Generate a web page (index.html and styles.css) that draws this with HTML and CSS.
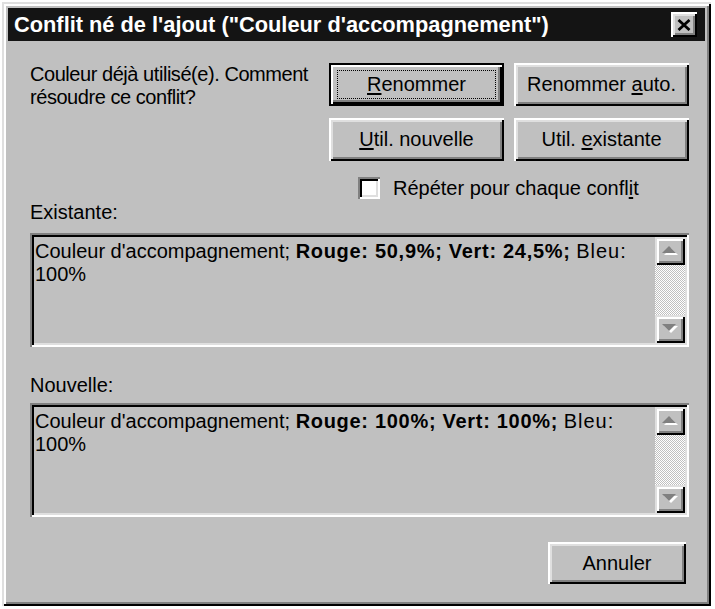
FILE: index.html
```html
<!DOCTYPE html>
<html lang="fr">
<head>
<meta charset="utf-8">
<title>Conflit</title>
<link rel="stylesheet" href="styles.css">
</head>
<body>
<div class="window">
  <div class="titlebar">
    <span class="title">Conflit né de l'ajout ("Couleur d'accompagnement")</span>
    <button class="close" aria-label="Fermer">
      <svg width="14" height="12" viewBox="0 0 14 12"><path d="M1.5 1 L12.5 11 M12.5 1 L1.5 11" stroke="#000" stroke-width="2.8" fill="none"/></svg>
    </button>
  </div>
  <div class="content">
    <div class="top">
      <p class="prompt">Couleur déjà utilisé(e). Comment<br>résoudre ce conflit?</p>
      <div class="actions">
        <button class="btn default"><u>R</u>enommer</button>
        <button class="btn">Renommer <u>a</u>uto.</button>
        <button class="btn"><u>U</u>til. nouvelle</button>
        <button class="btn">Util. <u>e</u>xistante</button>
      </div>
    </div>
    <label class="check"><span class="cbox"></span><span>Répéter pour chaque confl<u>i</u>t</span></label>
    <div class="field-label first">Existante:</div>
    <div class="textbox">
      <div class="text">Couleur d'accompagnement; <b>Rouge: 50,9%; Vert: 24,5%;</b> <span class="tail">Bleu:</span><br>100%</div>
      <div class="scroll">
        <div class="sbtn"><svg width="16" height="10" viewBox="0 0 16 10"><polygon points="9,2 16,9 2,9" fill="#fff"/><polygon points="7,0 14,7 0,7" fill="#808080"/></svg></div>
        <div class="track"></div>
        <div class="sbtn"><svg width="16" height="10" viewBox="0 0 16 10"><polygon points="2,2 16,2 9,9" fill="#fff"/><polygon points="0,0 14,0 7,7" fill="#808080"/></svg></div>
      </div>
    </div>
    <div class="field-label second">Nouvelle:</div>
    <div class="textbox tb2">
      <div class="text">Couleur d'accompagnement; <b>Rouge: 100%; Vert: 100%;</b> <span class="tail">Bleu:</span><br>100%</div>
      <div class="scroll">
        <div class="sbtn"><svg width="16" height="10" viewBox="0 0 16 10"><polygon points="9,2 16,9 2,9" fill="#fff"/><polygon points="7,0 14,7 0,7" fill="#808080"/></svg></div>
        <div class="track"></div>
        <div class="sbtn"><svg width="16" height="10" viewBox="0 0 16 10"><polygon points="2,2 16,2 9,9" fill="#fff"/><polygon points="0,0 14,0 7,7" fill="#808080"/></svg></div>
      </div>
    </div>
    <div class="footer">
      <button class="btn cancel">Annuler</button>
    </div>
  </div>
</div>
</body>
</html>
```
FILE: styles.css
```css
html, body {
  margin: 0;
  background: #ffffff;
}
body {
  padding: 2px;
  font-family: "Liberation Sans", Arial, sans-serif;
  font-size: 20px;
  color: #000;
}
.window {
  width: 709px;
  height: 604px;
  box-sizing: border-box;
  background: #c0c0c0;
  padding: 6px;
  box-shadow: inset 2px 2px #dfdfdf, inset -2px -2px #000, inset 4px 4px #fff, inset -4px -4px #808080;
}
.titlebar {
  height: 33px;
  background: #141414;
  display: flex;
  align-items: center;
  justify-content: space-between;
  padding: 0 8px 0 6px;
}
.title {
  color: #fff;
  font-weight: bold;
  font-size: 21.8px;
  white-space: nowrap;
}
.close {
  width: 26px;
  height: 25px;
  border: 0;
  padding: 0 1px 0 0;
  background: #c0c0c0;
  display: flex;
  align-items: center;
  justify-content: center;
  box-shadow: inset 2px 2px #fff, inset -2px -2px #000, inset 4px 4px #dfdfdf, inset -4px -4px #808080;
}
.content {
  padding: 22px 16px 0 22px;
}
.top {
  display: flex;
  justify-content: space-between;
  align-items: flex-start;
}
.prompt {
  margin: 0;
  line-height: 23px;
  letter-spacing: -0.45px;
}
.actions {
  display: grid;
  grid-template-columns: 175px 175px;
  gap: 12px 10px;
}
.btn {
  height: 43px;
  border: 0;
  padding: 0;
  background: #c0c0c0;
  color: #000;
  font-family: inherit;
  font-size: 20px;
  position: relative;
  box-shadow: inset 2px 2px #fff, inset -2px -2px #000, inset 4px 4px #dfdfdf, inset -4px -4px #808080;
}
.btn u, .check u {
  text-decoration-thickness: 2px;
  text-underline-offset: 2px;
}
.btn.default {
  box-shadow: inset 0 0 0 2px #000, inset 4px 4px #fff, inset -4px -4px #000, inset -6px -6px #808080;
}
.btn.default::after {
  content: "";
  position: absolute;
  top: 7px;
  left: 8px;
  right: 8px;
  bottom: 7px;
  border: 1px dotted #000;
}
.check {
  display: flex;
  align-items: center;
  gap: 13px;
  margin-top: 16px;
  padding-left: 328px;
  height: 22px;
}
.cbox {
  width: 22px;
  height: 22px;
  flex: none;
  background: #fff;
  box-shadow: inset 2px 2px #808080, inset -2px -2px #fff, inset 4px 4px #000, inset -4px -4px #dfdfdf;
}
.field-label {
  line-height: 23px;
}
.field-label.first {
  margin-top: 2px;
}
.field-label.second {
  margin-top: 27px;
}
.textbox {
  margin-top: 9px;
  height: 114px;
  box-sizing: border-box;
  padding: 4px;
  display: flex;
  box-shadow: inset 2px 2px #808080, inset -2px -2px #fff, inset 4px 4px #000, inset -4px -4px #dfdfdf;
}
.textbox.tb2 {
  margin-top: 6px;
}
.text {
  flex: 1;
  padding: 3px 1px 0;
  line-height: 23px;
}
.text b {
  letter-spacing: 0.7px;
}
.text .tail {
  letter-spacing: 1px;
}
.scroll {
  width: 30px;
  display: flex;
  flex-direction: column;
}
.sbtn {
  height: 28px;
  flex: none;
  background: #c0c0c0;
  display: flex;
  align-items: center;
  justify-content: center;
  box-shadow: inset 2px 2px #dfdfdf, inset -2px -2px #000, inset 4px 4px #fff, inset -4px -4px #808080;
}
.track {
  flex: 1;
  background-color: #c0c0c0;
  background-image: conic-gradient(#fff 25%, #c0c0c0 0 50%, #fff 0 75%, #c0c0c0 0);
  background-size: 2px 2px;
}
.footer {
  display: flex;
  justify-content: flex-end;
  margin-top: 25px;
  padding-right: 3px;
}
.btn.cancel {
  width: 138px;
  height: 42px;
}
```
